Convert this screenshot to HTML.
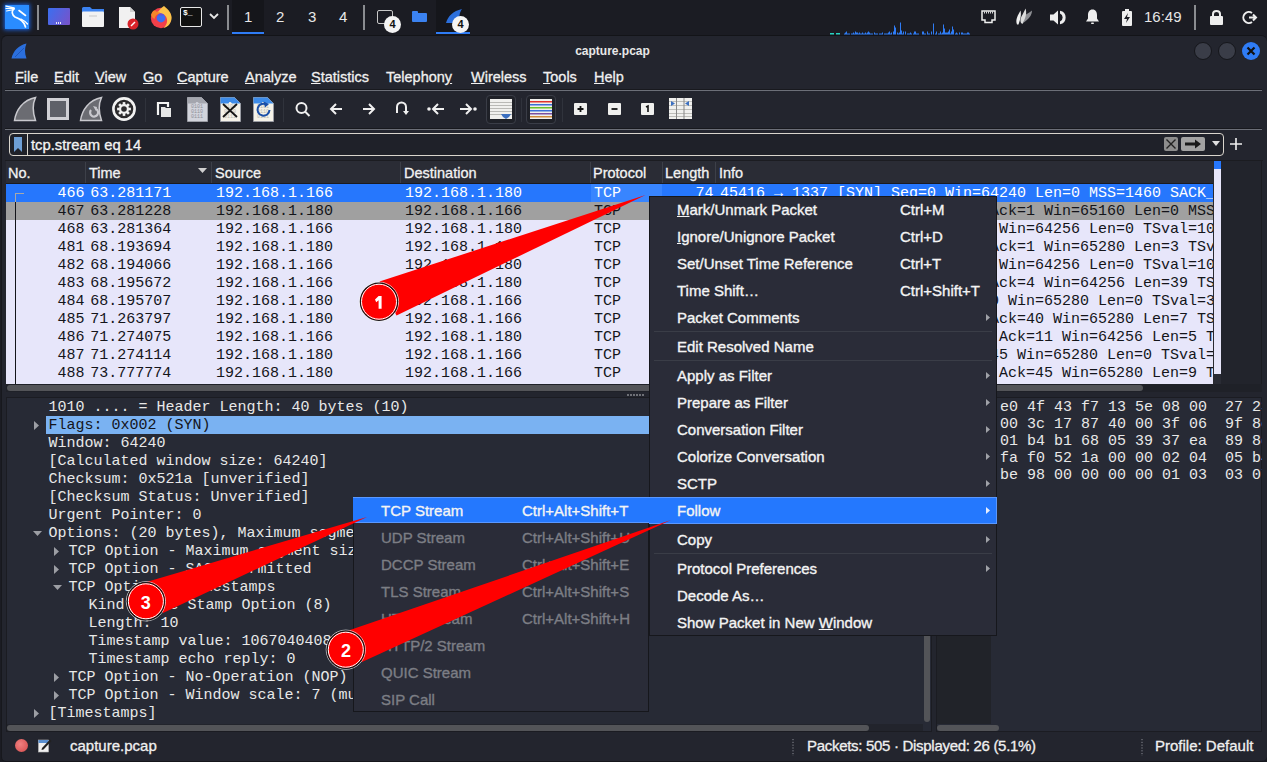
<!DOCTYPE html>
<html><head><meta charset="utf-8">
<style>
*{margin:0;padding:0;box-sizing:border-box}
html,body{width:1267px;height:762px;overflow:hidden;background:#1b1c23;font-family:"Liberation Sans",sans-serif;color:#e6e6e6}
.a{position:absolute}
svg{position:absolute;overflow:visible}
#win{position:absolute;left:1px;top:35px;width:1266px;height:727px;background:#23252e;border-radius:6px 6px 5px 5px;border-top:1px solid #131418;border-left:1px solid #17181d;border-bottom:1px solid #15161b}
.mono{font-family:"Liberation Mono",monospace;font-size:14.6px}
.menu span{position:absolute;top:69px;font-size:14.5px;color:#f0f0f0;-webkit-text-stroke:0.3px currentColor}
.hd{top:165px;font-size:14.5px;color:#f2f2f2;white-space:nowrap;-webkit-text-stroke:0.3px currentColor}
.row{left:0;width:1213px;height:18px;overflow:hidden;font-family:"Liberation Mono",monospace;font-size:15px;line-height:18px;white-space:pre}
.row span{top:1px}
.dl{font-family:"Liberation Mono",monospace;font-size:15px;line-height:18px;white-space:pre}
.hx{font-family:"Liberation Mono",monospace;font-size:15px;line-height:17.05px;white-space:pre;color:#e8e8e8}
.mi{font-size:15px;line-height:18px;color:#f4f4f4;white-space:nowrap;-webkit-text-stroke:0.35px currentColor}
.ws{position:absolute;top:8px;font-size:15px;color:#e8e8e8}
.st{-webkit-text-stroke:0.3px currentColor}
</style></head><body>
<!-- ===== taskbar ===== -->
<div class="a" style="left:0;top:0;width:1267px;height:35px;background:#1b1c23"></div>
<!-- kali logo -->
<div class="a" style="left:5px;top:5px;width:24px;height:24px;background:#2a8cff;box-shadow:0 0 4px 1px #1a5fd8"></div>
<svg style="left:5px;top:5px" width="24" height="24" viewBox="0 0 24 24"><g stroke="#fff" fill="none" stroke-linecap="round"><path d="M1 1.2 L9 3" stroke-width="1.3"/><path d="M1 3.5 L9 3.6" stroke-width="1.2"/><path d="M1.5 6 L9 4.5" stroke-width="1.2"/><path d="M9 3.5 C6 6 7 10 10 12 C15 14 19 16 20.5 22" stroke-width="1.7"/><path d="M14 5.5 L20.5 10.5" stroke-width="1.6"/><path d="M16 14 C19 15.5 21 17 22.5 19" stroke-width="1.3"/></g></svg>
<div class="a" style="left:44px;top:0px;width:0;height:0"></div>
<div class="a" style="left:37px;top:5px;width:2px;height:25px;background:#8a8c90"></div>
<!-- purple app -->
<div class="a" style="left:48px;top:8px;width:22px;height:17px;border-radius:1px;background:linear-gradient(120deg,#3a6ff0,#7a52c8)"></div>
<div class="a" style="left:56px;top:22px;width:6px;height:2px;background:repeating-linear-gradient(90deg,#e8e8f8 0 1.5px,transparent 1.5px 2px)"></div>
<!-- folder -->
<svg style="left:82px;top:7px" width="22" height="20" viewBox="0 0 22 20"><path d="M0 1.5 Q0 0 1.5 0 H8 L10 2 H22 V6 H0z" fill="#3b82f0"/><rect x="0" y="4.5" width="22" height="15.5" rx="1" fill="#f2f2f2"/><path d="M7 9h8" stroke="#c8c8c8" stroke-width="1"/></svg>
<!-- doc -->
<svg style="left:118px;top:6px" width="22" height="23" viewBox="0 0 22 23"><path d="M1 1h11l5 5v16H1z" fill="#f1f1f1"/><path d="M12 1v5h5" fill="#cfcfcf"/><circle cx="15" cy="18" r="5.5" fill="#d8242a"/><path d="M13 20l4-4" stroke="#fff" stroke-width="1.5"/></svg>
<!-- firefox -->
<svg style="left:150px;top:6px" width="22" height="23" viewBox="0 0 22 23"><circle cx="11" cy="12" r="10.2" fill="#f2404a"/><path d="M1 9 C2 5 4 4 5 4.5 L7 6 L8 5 L10 7.5 C7 8 5 10 4.5 13 C3 12 1.5 11 1 9z" fill="#f7862b"/><path d="M8 6 C10 3 13 0.5 14 0 C16 2 21 5 21.6 11 C21.8 17 18 21 13.5 22 C18 18 18.5 12 14 8.5z" fill="#fcc34a"/><circle cx="11" cy="12" r="4.4" fill="#3b6ff3"/><path d="M7.5 9.5 C9 7.5 12 7 14 8.5 L12.5 9.5z" fill="#6650d8"/></svg>
<!-- terminal -->
<div class="a" style="left:180px;top:7px;width:22px;height:20px;border:1.5px solid #e8e8e8;border-radius:2px;background:#111"></div>
<div class="a" style="left:183px;top:8px;font-size:8px;font-weight:bold;color:#fff;font-family:'Liberation Mono',monospace">$_</div>
<svg style="left:209px;top:13px" width="10" height="7" viewBox="0 0 10 7"><path d="M1 1l4 4 4-4" stroke="#e8e8e8" stroke-width="1.8" fill="none"/></svg>
<div class="a" style="left:227px;top:5px;width:2px;height:25px;background:#8a8c90"></div>
<!-- workspaces -->
<div class="a" style="left:232px;top:0;width:32px;height:35px;background:#15161b"></div>
<div class="a" style="left:232px;top:32px;width:32px;height:2px;background:#2f7cf5"></div>
<span class="ws" style="left:244px">1</span>
<span class="ws" style="left:276px">2</span>
<span class="ws" style="left:308px">3</span>
<span class="ws" style="left:339px">4</span>
<div class="a" style="left:363px;top:5px;width:2px;height:25px;background:#8a8c90"></div>
<!-- terminal app -->
<div class="a" style="left:377px;top:10px;width:16px;height:14px;border:1.5px solid #c8c8c8;border-radius:2px"></div>
<div class="a" style="left:384px;top:16px;width:17px;height:17px;border-radius:50%;background:#f4f4f4;color:#111;font-size:11px;font-weight:bold;text-align:center;line-height:17px">4</div>
<!-- folder app -->
<div class="a" style="left:412px;top:11px;width:6px;height:3px;background:#3b82f0;border-radius:1px"></div>
<div class="a" style="left:412px;top:13px;width:15px;height:9px;background:#3b82f0;border-radius:1px"></div>
<!-- wireshark app -->
<div class="a" style="left:436px;top:0;width:34px;height:35px;background:#15161b"></div>
<div class="a" style="left:436px;top:32px;width:34px;height:2px;background:#2f7cf5"></div>
<svg style="left:445px;top:8px" width="18" height="16" viewBox="0 0 18 16"><path d="M1 15 C3 8 8 3 17 1 C14 5 14 10 15 15z" fill="#2b6fdc"/></svg>
<div class="a" style="left:452px;top:16px;width:17px;height:17px;border-radius:50%;background:#f4f4f4;color:#111;font-size:11px;font-weight:bold;text-align:center;line-height:17px">4</div>
<!-- cpu graph -->
<svg id="cpu" style="left:830px;top:18px" width="142" height="17" viewBox="0 0 142 17"><rect x="0" y="15" width="4" height="1.5" fill="#26d4c2"/><rect x="6" y="15" width="4" height="1.5" fill="#26d4c2"/><rect x="14" y="15.5" width="1" height="1" fill="#2f7cf5"/><rect x="15" y="14.5" width="1" height="2" fill="#2f7cf5"/><rect x="16" y="13.5" width="1" height="3" fill="#2f7cf5"/><rect x="17" y="15.5" width="1" height="1" fill="#2f7cf5"/><rect x="18" y="15.5" width="1" height="1" fill="#2f7cf5"/><rect x="19" y="15.5" width="1" height="1" fill="#2f7cf5"/><rect x="21" y="15.5" width="1" height="1" fill="#2f7cf5"/><rect x="22" y="15.5" width="1" height="1" fill="#2f7cf5"/><rect x="23" y="14.5" width="1" height="2" fill="#2f7cf5"/><rect x="24" y="15.5" width="1" height="1" fill="#2f7cf5"/><rect x="25" y="13.5" width="1" height="3" fill="#2f7cf5"/><rect x="26" y="14.5" width="1" height="2" fill="#2f7cf5"/><rect x="27" y="14.5" width="1" height="2" fill="#2f7cf5"/><rect x="28" y="15.5" width="1" height="1" fill="#2f7cf5"/><rect x="29" y="14.5" width="1" height="2" fill="#2f7cf5"/><rect x="30" y="15.5" width="1" height="1" fill="#2f7cf5"/><rect x="31" y="15.5" width="1" height="1" fill="#2f7cf5"/><rect x="32" y="14.5" width="1" height="2" fill="#2f7cf5"/><rect x="33" y="15.5" width="1" height="1" fill="#2f7cf5"/><rect x="34" y="15.5" width="1" height="1" fill="#2f7cf5"/><rect x="35" y="14.5" width="1" height="2" fill="#2f7cf5"/><rect x="36" y="15.5" width="1" height="1" fill="#2f7cf5"/><rect x="37" y="14.5" width="1" height="2" fill="#2f7cf5"/><rect x="38" y="13.5" width="1" height="3" fill="#2f7cf5"/><rect x="39" y="14.5" width="1" height="2" fill="#2f7cf5"/><rect x="40" y="15.5" width="1" height="1" fill="#2f7cf5"/><rect x="41" y="15.5" width="1" height="1" fill="#2f7cf5"/><rect x="42" y="15.5" width="1" height="1" fill="#2f7cf5"/><rect x="44" y="14.5" width="1" height="2" fill="#2f7cf5"/><rect x="45" y="15.5" width="1" height="1" fill="#2f7cf5"/><rect x="46" y="15.5" width="1" height="1" fill="#2f7cf5"/><rect x="47" y="15.5" width="1" height="1" fill="#2f7cf5"/><rect x="49" y="15.5" width="1" height="1" fill="#2f7cf5"/><rect x="50" y="15.5" width="1" height="1" fill="#2f7cf5"/><rect x="51" y="15.5" width="1" height="1" fill="#2f7cf5"/><rect x="52" y="14.5" width="1" height="2" fill="#2f7cf5"/><rect x="54" y="15.5" width="1" height="1" fill="#2f7cf5"/><rect x="55" y="15.5" width="1" height="1" fill="#2f7cf5"/><rect x="56" y="15.5" width="1" height="1" fill="#2f7cf5"/><rect x="57" y="15.5" width="1" height="1" fill="#2f7cf5"/><rect x="58" y="14.5" width="1" height="2" fill="#2f7cf5"/><rect x="59" y="13.5" width="1" height="3" fill="#2f7cf5"/><rect x="60" y="15.5" width="1" height="1" fill="#2f7cf5"/><rect x="61" y="14.5" width="1" height="2" fill="#2f7cf5"/><rect x="63" y="13.5" width="1" height="3" fill="#2f7cf5"/><rect x="64" y="7.5" width="1" height="9" fill="#2f7cf5"/><rect x="65" y="9.5" width="1" height="7" fill="#2f7cf5"/><rect x="67" y="14.5" width="1" height="2" fill="#2f7cf5"/><rect x="68" y="15.5" width="1" height="1" fill="#2f7cf5"/><rect x="69" y="14.5" width="1" height="2" fill="#2f7cf5"/><rect x="70" y="4.5" width="1" height="12" fill="#2f7cf5"/><rect x="71" y="12.5" width="1" height="4" fill="#2f7cf5"/><rect x="72" y="15.5" width="1" height="1" fill="#2f7cf5"/><rect x="73" y="13.5" width="1" height="3" fill="#2f7cf5"/><rect x="75" y="13.5" width="1" height="3" fill="#2f7cf5"/><rect x="77" y="15.5" width="1" height="1" fill="#2f7cf5"/><rect x="78" y="15.5" width="1" height="1" fill="#2f7cf5"/><rect x="79" y="15.5" width="1" height="1" fill="#2f7cf5"/><rect x="80" y="14.5" width="1" height="2" fill="#2f7cf5"/><rect x="81" y="15.5" width="1" height="1" fill="#2f7cf5"/><rect x="83" y="15.5" width="1" height="1" fill="#2f7cf5"/><rect x="84" y="13.5" width="1" height="3" fill="#2f7cf5"/><rect x="85" y="13.5" width="1" height="3" fill="#2f7cf5"/><rect x="86" y="15.5" width="1" height="1" fill="#2f7cf5"/><rect x="87" y="15.5" width="1" height="1" fill="#2f7cf5"/><rect x="88" y="15.5" width="1" height="1" fill="#2f7cf5"/><rect x="92" y="13.5" width="1" height="3" fill="#2f7cf5"/><rect x="93" y="13.5" width="1" height="3" fill="#2f7cf5"/><rect x="94" y="15.5" width="1" height="1" fill="#2f7cf5"/><rect x="95" y="15.5" width="1" height="1" fill="#2f7cf5"/><rect x="97" y="13.5" width="1" height="3" fill="#2f7cf5"/><rect x="98" y="15.5" width="1" height="1" fill="#2f7cf5"/><rect x="99" y="15.5" width="1" height="1" fill="#2f7cf5"/><rect x="101" y="13.5" width="1" height="3" fill="#2f7cf5"/><rect x="103" y="5.5" width="1" height="11" fill="#2f7cf5"/><rect x="105" y="15.5" width="1" height="1" fill="#2f7cf5"/><rect x="106" y="13.5" width="1" height="3" fill="#2f7cf5"/><rect x="108" y="15.5" width="1" height="1" fill="#2f7cf5"/><rect x="109" y="15.5" width="1" height="1" fill="#2f7cf5"/><rect x="110" y="13.5" width="1" height="3" fill="#2f7cf5"/><rect x="111" y="15.5" width="1" height="1" fill="#2f7cf5"/><rect x="112" y="14.5" width="1" height="2" fill="#2f7cf5"/><rect x="113" y="6.5" width="1" height="10" fill="#2f7cf5"/><rect x="114" y="10.5" width="1" height="6" fill="#2f7cf5"/><rect x="115" y="14.5" width="1" height="2" fill="#2f7cf5"/><rect x="116" y="14.5" width="1" height="2" fill="#2f7cf5"/><rect x="117" y="14.5" width="1" height="2" fill="#2f7cf5"/><rect x="118" y="13.5" width="1" height="3" fill="#2f7cf5"/><rect x="119" y="11.5" width="1" height="5" fill="#2f7cf5"/><rect x="120" y="15.5" width="1" height="1" fill="#2f7cf5"/><rect x="121" y="13.5" width="1" height="3" fill="#2f7cf5"/><rect x="122" y="8.5" width="1" height="8" fill="#2f7cf5"/><rect x="123" y="11.5" width="1" height="5" fill="#2f7cf5"/><rect x="125" y="15.5" width="1" height="1" fill="#2f7cf5"/><rect x="126" y="14.5" width="1" height="2" fill="#2f7cf5"/><rect x="127" y="15.5" width="1" height="1" fill="#2f7cf5"/><rect x="129" y="14.5" width="1" height="2" fill="#2f7cf5"/><rect x="131" y="14.5" width="1" height="2" fill="#2f7cf5"/><rect x="132" y="14.5" width="1" height="2" fill="#2f7cf5"/><rect x="133" y="15.5" width="1" height="1" fill="#2f7cf5"/><rect x="134" y="15.5" width="1" height="1" fill="#2f7cf5"/><rect x="135" y="15.5" width="1" height="1" fill="#2f7cf5"/><rect x="136" y="15.5" width="1" height="1" fill="#2f7cf5"/><rect x="137" y="14.5" width="1" height="2" fill="#2f7cf5"/><rect x="138" y="14.5" width="1" height="2" fill="#2f7cf5"/><rect x="139" y="15.5" width="1" height="1" fill="#2f7cf5"/></svg>
<!-- tray -->
<svg style="left:981px;top:10px" width="15" height="14" viewBox="0 0 15 14"><path d="M1 1H14V10H11V12.5H4V10H1z" fill="none" stroke="#eee" stroke-width="1.5"/><path d="M3.5 1.5v2M5.5 1.5v2M7.5 1.5v2M9.5 1.5v2M11.5 1.5v2" stroke="#eee" stroke-width="0.9"/></svg>
<svg style="left:1015px;top:8px" width="18" height="17" viewBox="0 0 18 17"><path d="M10 7 C14 5 16 3 17 2.5 C17 7 14 11 8 15z" fill="#8d8e93"/><path d="M6 15 C4 10 8 7 10.5 0.5 C12 5 11 9 7.5 16z" fill="#dcdcdc"/><path d="M2 16.5 C0 12 3 7 5.5 2.5 C6.5 7 5.5 11 3.5 16.5z" fill="#f0f0f0"/></svg>
<svg style="left:1049px;top:9px" width="19" height="17" viewBox="0 0 19 17"><path d="M1 5.5h3.5L9 1.5V15.5L4.5 11.5H1z" fill="#eee"/><path d="M11 1.8 A6.8 6.8 0 0 1 11 15.2 V12.4 A4.2 4.2 0 0 0 11 4.6z" fill="#eee"/><path d="M11 6.5 A2 2 0 0 1 11 10.5z" fill="none"/></svg>
<svg style="left:1085px;top:8px" width="15" height="17" viewBox="0 0 15 17"><path d="M7.5 1.5 C4.3 1.5 3 4 3 7 V10.5 L1 13.5 H14 L12 10.5 V7 C12 4 10.7 1.5 7.5 1.5z" fill="#eee"/><rect x="6" y="14.5" width="3" height="1.6" rx="0.8" fill="#eee"/></svg>
<svg style="left:1121px;top:9px" width="12" height="17" viewBox="0 0 12 17"><rect x="4" y="0" width="4" height="2" fill="#eee"/><rect x="1" y="2" width="10" height="15" rx="1" fill="#eee"/><path d="M7 4 L3 10 H6 L5 14 L9 8 H6z" fill="#1b1c23"/></svg>
<div class="a" style="left:1144px;top:8px;font-size:15px;color:#e6e6e6">16:49</div>
<div class="a" style="left:1194px;top:5px;width:2px;height:25px;background:#8a8c90"></div>
<svg style="left:1209px;top:9px" width="15" height="16" viewBox="0 0 15 16"><path d="M4 7V5 C4 1 11 1 11 5 V7" stroke="#eee" stroke-width="2" fill="none"/><rect x="1" y="7" width="13" height="9" rx="1" fill="#eee"/></svg>
<svg style="left:1243px;top:10px" width="16" height="15" viewBox="0 0 16 15"><path d="M9 3 A5.5 5.5 0 1 0 9 12" stroke="#eee" stroke-width="2" fill="none"/><path d="M6 7.5h6M10 4.5l3 3-3 3" stroke="#eee" stroke-width="2" fill="none"/></svg>

<!-- ===== window ===== -->
<div id="win"></div>
<svg style="left:11px;top:43px" width="16" height="16" viewBox="0 0 16 16"><path d="M0.5 15.5 C2 8 8 2 15.5 0.5 C13.5 5 13.5 10 15.5 15.5z" fill="#2b6fdc"/><path d="M4 14 L13 5" stroke="#1d55b8" stroke-width="1"/></svg>
<div class="a" style="left:0;top:44px;width:1225px;text-align:center;font-size:12px;font-weight:bold;color:#e8e8e8">capture.pcap</div>
<div class="a" style="left:1194px;top:42px;width:18px;height:18px;border-radius:50%;background:#3a3d48;border:1px solid #15161b"></div>
<div class="a" style="left:1218px;top:42px;width:18px;height:18px;border-radius:50%;background:#3a3d48;border:1px solid #15161b"></div>
<div class="a" style="left:1242px;top:42px;width:18px;height:18px;border-radius:50%;background:#2f7cf5"></div>
<svg style="left:1242px;top:42px" width="18" height="18" viewBox="0 0 18 18"><path d="M5.5 5.5l7 7M12.5 5.5l-7 7" stroke="#111" stroke-width="2.2"/></svg>
<div class="menu">
<span style="left:15px"><u>F</u>ile</span>
<span style="left:54px"><u>E</u>dit</span>
<span style="left:95px"><u>V</u>iew</span>
<span style="left:143px"><u>G</u>o</span>
<span style="left:177px"><u>C</u>apture</span>
<span style="left:245px"><u>A</u>nalyze</span>
<span style="left:311px"><u>S</u>tatistics</span>
<span style="left:386px">Telephon<u>y</u></span>
<span style="left:471px"><u>W</u>ireless</span>
<span style="left:543px"><u>T</u>ools</span>
<span style="left:594px"><u>H</u>elp</span>
</div>
<div class="a" style="left:5px;top:89px;width:1257px;height:1px;background:#18191e"></div><div class="a" style="left:5px;top:90px;width:1257px;height:1px;background:#6c6f78"></div>
<!-- toolbar -->
<svg style="left:13px;top:96px" width="24" height="26" viewBox="0 0 24 26"><path d="M1.5 24.5 C3 14 10 4 22.5 1.5 C19.5 8 19.5 16 22.5 24.5z" fill="#6b6c72" stroke="#c9c9ce" stroke-width="1.5"/></svg>
<div class="a" style="left:47px;top:98px;width:22px;height:22px;border:3px solid #d0d0d5;background:#5f6169"></div>
<svg style="left:79px;top:96px" width="24" height="26" viewBox="0 0 24 26"><path d="M1.5 24.5 C3 14 10 4 22.5 1.5 C19.5 8 19.5 16 22.5 24.5z" fill="#6b6c72" stroke="#c9c9ce" stroke-width="1.5"/><path d="M12 14 A4 4 0 1 0 17 13" stroke="#c9c9ce" stroke-width="2.2" fill="none"/><path d="M14 10l4 1-1 4z" fill="#c9c9ce"/></svg>
<svg style="left:112px;top:97px" width="24" height="24" viewBox="0 0 24 24"><circle cx="12" cy="12" r="10.6" fill="#2b2a2c" stroke="#f2f2f2" stroke-width="2.6"/><rect x="16.30" y="10.70" width="2.6" height="2.6" transform="rotate(0 17.60 12.00)" fill="#f2f2f2"/><rect x="14.66" y="14.66" width="2.6" height="2.6" transform="rotate(45 15.96 15.96)" fill="#f2f2f2"/><rect x="10.70" y="16.30" width="2.6" height="2.6" transform="rotate(90 12.00 17.60)" fill="#f2f2f2"/><rect x="6.74" y="14.66" width="2.6" height="2.6" transform="rotate(135 8.04 15.96)" fill="#f2f2f2"/><rect x="5.10" y="10.70" width="2.6" height="2.6" transform="rotate(180 6.40 12.00)" fill="#f2f2f2"/><rect x="6.74" y="6.74" width="2.6" height="2.6" transform="rotate(225 8.04 8.04)" fill="#f2f2f2"/><rect x="10.70" y="5.10" width="2.6" height="2.6" transform="rotate(270 12.00 6.40)" fill="#f2f2f2"/><rect x="14.66" y="6.74" width="2.6" height="2.6" transform="rotate(315 15.96 8.04)" fill="#f2f2f2"/><circle cx="12" cy="12" r="5" fill="#f2f2f2"/><circle cx="12" cy="12" r="2.8" fill="#2b2a2c"/></svg>
<div class="a" style="left:145px;top:98px;width:1px;height:24px;background:#30333c"></div>
<svg style="left:156px;top:101px" width="16" height="17" viewBox="0 0 16 17"><path d="M2 14V2h10v4" stroke="#f4f4f4" stroke-width="2.2" fill="none"/><path d="M5 6h4l1 1h5v9H5z" fill="#e6e6e6"/></svg>
<svg style="left:187px;top:97px" width="21" height="25" viewBox="0 0 21 25"><path d="M0.5 0.5h14l6 6v18h-20z" fill="#d2d4dc" stroke="#9a9ca4" stroke-width="1"/><path d="M0.5 0.5h14l6 6H12 C10 4 9 5 8.5 6.5H0.5z" fill="#a4a6ae"/><g font-family="Liberation Mono" font-size="5" fill="#8e9098"><text x="4" y="11">0101</text><text x="4" y="16">0110</text><text x="4" y="21">0111</text></g></svg>
<svg style="left:220px;top:97px" width="21" height="25" viewBox="0 0 21 25"><path d="M0.5 0.5h14l6 6v18h-20z" fill="#f5f2e8" stroke="#9a9ca4" stroke-width="1"/><path d="M0.5 0.5h14l6 6H12 C10 4 9 5 8.5 6.5H0.5z" fill="#3d8be8"/><g font-family="Liberation Mono" font-size="5" fill="#b8b8b0"><text x="4" y="11">0101</text><text x="4" y="16">0110</text><text x="4" y="21">0111</text></g><path d="M3 7l14 13M17 7L3 20" stroke="#151515" stroke-width="1.8"/></svg>
<svg style="left:253px;top:97px" width="21" height="25" viewBox="0 0 21 25"><path d="M0.5 0.5h14l6 6v18h-20z" fill="#f5f2e8" stroke="#9a9ca4" stroke-width="1"/><path d="M0.5 0.5h14l6 6H12 C10 4 9 5 8.5 6.5H0.5z" fill="#3d8be8"/><g font-family="Liberation Mono" font-size="5" fill="#b8b8b0"><text x="4" y="11">0101</text><text x="4" y="16">0110</text><text x="4" y="21">0111</text></g><path d="M13.5 7.5 A6 6 0 1 0 16.5 13" stroke="#1a4fa8" stroke-width="2" fill="none"/><path d="M10.5 4.5l5.5 2.5-4 3.5z" fill="#1a4fa8"/></svg>
<div class="a" style="left:283px;top:98px;width:1px;height:24px;background:#30333c"></div>
<svg style="left:294px;top:101px" width="17" height="17" viewBox="0 0 17 17"><circle cx="7.5" cy="7" r="5" fill="none" stroke="#f0f0f0" stroke-width="2"/><path d="M11 10.5l4.5 4.5" stroke="#f0f0f0" stroke-width="2"/></svg>
<svg style="left:329px;top:102px" width="14" height="14" viewBox="0 0 14 14"><path d="M13 7H2M7 2L2 7l5 5" stroke="#f0f0f0" stroke-width="2" fill="none"/></svg>
<svg style="left:362px;top:102px" width="14" height="14" viewBox="0 0 14 14"><path d="M1 7h11M7 2l5 5-5 5" stroke="#f0f0f0" stroke-width="2" fill="none"/></svg>
<svg style="left:395px;top:101px" width="14" height="15" viewBox="0 0 14 15"><path d="M2 12V6 A4.5 4.5 0 0 1 11 6V11" stroke="#f0f0f0" stroke-width="2" fill="none"/><path d="M8 10l3 4 3-4z" fill="#f0f0f0"/></svg>
<svg style="left:427px;top:102px" width="18" height="14" viewBox="0 0 18 14"><circle cx="2" cy="7" r="1.8" fill="#f0f0f0"/><path d="M17 7H6M11 2L6 7l5 5" stroke="#f0f0f0" stroke-width="2" fill="none"/></svg>
<svg style="left:459px;top:102px" width="18" height="14" viewBox="0 0 18 14"><circle cx="16" cy="7" r="1.8" fill="#f0f0f0"/><path d="M1 7h11M7 2l5 5-5 5" stroke="#f0f0f0" stroke-width="2" fill="none"/></svg>
<div class="a" style="left:486px;top:95px;width:30px;height:29px;border:1px solid #3a3d47;border-radius:4px;background:#1f2128"></div>
<svg style="left:490px;top:99px" width="22" height="21" viewBox="0 0 22 21"><rect x="0" y="0" width="22" height="20" fill="#f0f0ee"/><g fill="#b9b9b6"><rect y="3" width="22" height="1"/><rect y="6" width="22" height="1"/><rect y="9" width="22" height="1"/><rect y="12" width="22" height="1"/><rect y="15" width="22" height="1"/></g><path d="M11 15h10l-2 3-3 2-3-2z" fill="#3b6fc0"/></svg>
<div class="a" style="left:521px;top:98px;width:1px;height:24px;background:#30333c"></div>
<div class="a" style="left:526px;top:95px;width:30px;height:29px;border:1px solid #3a3d47;border-radius:4px;background:#1f2128"></div>
<svg style="left:530px;top:99px" width="22" height="21" viewBox="0 0 22 21"><rect x="0" y="0" width="22" height="20" fill="#f0f0ee"/><rect y="2" width="22" height="1.5" fill="#e0342f"/><rect y="5" width="22" height="1.5" fill="#3a6fd8"/><rect y="8" width="22" height="1.5" fill="#6ac02a"/><rect y="11" width="22" height="1.5" fill="#3a6fd8"/><rect y="14" width="22" height="1.5" fill="#7a4fa0"/><rect y="17" width="22" height="1.5" fill="#d08a3a"/></svg>
<div class="a" style="left:562px;top:98px;width:1px;height:24px;background:#30333c"></div>
<svg style="left:574px;top:103px" width="13" height="12" viewBox="0 0 13 12"><rect width="13" height="12" rx="1" fill="#f0f0ee"/><path d="M6.5 3v6M3.5 6h6" stroke="#111" stroke-width="1.8"/></svg>
<svg style="left:608px;top:103px" width="13" height="12" viewBox="0 0 13 12"><rect width="13" height="12" rx="1" fill="#f0f0ee"/><path d="M3.5 6h6" stroke="#111" stroke-width="1.8"/></svg>
<svg style="left:641px;top:103px" width="13" height="12" viewBox="0 0 13 12"><rect width="13" height="12" rx="1" fill="#f0f0ee"/><path d="M5 4l2-1v6" stroke="#111" stroke-width="1.6" fill="none"/></svg>
<svg style="left:669px;top:98px" width="23" height="22" viewBox="0 0 23 22"><rect width="23" height="21" fill="#f0f0ee"/><g fill="#bdbdb9"><rect y="3" width="23" height="1"/><rect y="7" width="23" height="1"/><rect y="11" width="23" height="1"/><rect y="15" width="23" height="1"/><rect y="18" width="23" height="1"/></g><rect x="7" y="0" width="1" height="21" fill="#888"/><rect x="14.5" y="0" width="1" height="21" fill="#888"/><path d="M2 3v5l4-2.5z M20 3v5l-4-2.5z" fill="#3b6fc0"/></svg>

<div class="a" style="left:5px;top:128px;width:1257px;height:1px;background:#18191e"></div><div class="a" style="left:5px;top:129px;width:1257px;height:1px;background:#6c6f78"></div>

<!-- filter -->
<div class="a" style="left:9px;top:133px;width:1215px;height:23px;border:1.5px solid #d9d5cd;border-radius:4px;background:#1f2129"></div>
<div class="a" style="left:27px;top:134px;width:1px;height:21px;background:#d9d5cd"></div>
<svg style="left:13px;top:137px" width="10" height="15" viewBox="0 0 10 15"><path d="M1 0h8v15l-4-4-4 4z" fill="#6e9fd6"/></svg>
<div class="a st" style="left:31px;top:137px;font-size:14.8px;color:#f4f4f4">tcp.stream eq 14</div>
<div class="a" style="left:1164px;top:137px;width:14px;height:14px;background:#8d8d8d;border-radius:2px"></div>
<svg style="left:1164px;top:137px" width="14" height="14" viewBox="0 0 14 14"><path d="M2.5 2.5l9 9M11.5 2.5l-9 9" stroke="#222" stroke-width="1.4"/></svg>
<div class="a" style="left:1181px;top:137px;width:24px;height:14px;background:#a3a3a3;border-radius:2px"></div>
<svg style="left:1181px;top:137px" width="24" height="14" viewBox="0 0 24 14"><path d="M4 5.5h10V2.5l6 4.5-6 4.5V8.5H4z" fill="#1a1a1a"/></svg>
<svg style="left:1212px;top:141px" width="8" height="5" viewBox="0 0 8 5"><path d="M0 0h8L4 5z" fill="#e0e0e0"/></svg>
<svg style="left:1229px;top:137px" width="14" height="14" viewBox="0 0 14 14"><path d="M7 1v12M1 7h12" stroke="#f0f0f0" stroke-width="1.6"/></svg>
<!-- packet list -->
<div class="a" style="left:5px;top:160px;width:1258px;height:1px;background:#1b1c21"></div><div class="a" style="left:1221px;top:161px;width:41px;height:223px;background:#22242c;border-right:1px solid #1b1c21"></div>
<div class="a" style="left:6px;top:161px;width:1207px;height:23px;background:#2a2c35;border-bottom:1px solid #1a1b20"></div>

<span class="a hd" style="left:8px">No.</span>
<div class="a" style="left:85px;top:162px;width:1px;height:21px;background:#3d4049"></div>
<span class="a hd" style="left:89px">Time</span>
<div class="a" style="left:211px;top:162px;width:1px;height:21px;background:#3d4049"></div>
<span class="a hd" style="left:215px">Source</span>
<div class="a" style="left:400px;top:162px;width:1px;height:21px;background:#3d4049"></div>
<span class="a hd" style="left:404px">Destination</span>
<div class="a" style="left:590px;top:162px;width:1px;height:21px;background:#3d4049"></div>
<span class="a hd" style="left:593px">Protocol</span>
<div class="a" style="left:662px;top:162px;width:1px;height:21px;background:#3d4049"></div>
<span class="a hd" style="left:665px">Length</span>
<div class="a" style="left:715px;top:162px;width:1px;height:21px;background:#3d4049"></div>
<span class="a hd" style="left:719px">Info</span>
<svg style="left:198px;top:168px" width="9" height="5" viewBox="0 0 9 5"><path d="M0 0h9L4.5 5z" fill="#d0d0d0"/></svg>
<div class="a" style="left:6px;top:184px;width:1207px;height:200px;background:#e7e6fa"></div>
<div class="a" style="left:6px;top:184px;width:1207px;height:18px;background:#2677fd"></div>
<div class="a" style="left:591px;top:184px;width:71px;height:18px;background:#3885ff"></div>
<div class="a row" style="top:184px;color:#ffffff"><span class="a" style="right:1128.5px">466</span><span class="a" style="left:90.3px">63.281171</span><span class="a" style="left:216px">192.168.1.166</span><span class="a" style="left:405px">192.168.1.180</span><span class="a" style="left:594px">TCP</span><span class="a" style="right:499.5px">74</span><span class="a" style="left:720px">45416 → 1337 [SYN] Seq=0 Win=64240 Len=0 MSS=1460 SACK_PERM</span></div>
<div class="a" style="left:6px;top:202px;width:1207px;height:18px;background:#a0a0a0"></div>
<div class="a row" style="top:202px;color:#14151a"><span class="a" style="right:1128.5px">467</span><span class="a" style="left:90.3px">63.281228</span><span class="a" style="left:216px">192.168.1.180</span><span class="a" style="left:405px">192.168.1.166</span><span class="a" style="left:594px">TCP</span><span class="a" style="right:499.5px">74</span><span class="a" style="left:720px">1337 → 45416 [SYN, ACK] Seq=0 Ack=1 Win=65160 Len=0 MSS=1460 SACK_PERM</span></div>
<div class="a row" style="top:220px;color:#14151a"><span class="a" style="right:1128.5px">468</span><span class="a" style="left:90.3px">63.281364</span><span class="a" style="left:216px">192.168.1.166</span><span class="a" style="left:405px">192.168.1.180</span><span class="a" style="left:594px">TCP</span><span class="a" style="right:499.5px">66</span><span class="a" style="left:720px">45416 → 1337 [ACK] Seq=1 Ack=1 Win=64256 Len=0 TSval=1067040408</span></div>
<div class="a row" style="top:238px;color:#14151a"><span class="a" style="right:1128.5px">481</span><span class="a" style="left:90.3px">68.193694</span><span class="a" style="left:216px">192.168.1.180</span><span class="a" style="left:405px">192.168.1.166</span><span class="a" style="left:594px">TCP</span><span class="a" style="right:499.5px">69</span><span class="a" style="left:720px">1337 → 45416 [PSH, ACK] Seq=1 Ack=1 Win=65280 Len=3 TSval=3</span></div>
<div class="a row" style="top:256px;color:#14151a"><span class="a" style="right:1128.5px">482</span><span class="a" style="left:90.3px">68.194066</span><span class="a" style="left:216px">192.168.1.166</span><span class="a" style="left:405px">192.168.1.180</span><span class="a" style="left:594px">TCP</span><span class="a" style="right:499.5px">66</span><span class="a" style="left:720px">45416 → 1337 [ACK] Seq=1 Ack=4 Win=64256 Len=0 TSval=1067045</span></div>
<div class="a row" style="top:274px;color:#14151a"><span class="a" style="right:1128.5px">483</span><span class="a" style="left:90.3px">68.195672</span><span class="a" style="left:216px">192.168.1.166</span><span class="a" style="left:405px">192.168.1.180</span><span class="a" style="left:594px">TCP</span><span class="a" style="right:499.5px">105</span><span class="a" style="left:720px">45416 → 1337 [PSH, ACK] Seq=1 Ack=4 Win=64256 Len=39 TSval=1</span></div>
<div class="a row" style="top:292px;color:#14151a"><span class="a" style="right:1128.5px">484</span><span class="a" style="left:90.3px">68.195707</span><span class="a" style="left:216px">192.168.1.180</span><span class="a" style="left:405px">192.168.1.166</span><span class="a" style="left:594px">TCP</span><span class="a" style="right:499.5px">66</span><span class="a" style="left:720px">1337 → 45416 [ACK] Seq=4 Ack=40 Win=65280 Len=0 TSval=3</span></div>
<div class="a row" style="top:310px;color:#14151a"><span class="a" style="right:1128.5px">485</span><span class="a" style="left:90.3px">71.263797</span><span class="a" style="left:216px">192.168.1.180</span><span class="a" style="left:405px">192.168.1.166</span><span class="a" style="left:594px">TCP</span><span class="a" style="right:499.5px">73</span><span class="a" style="left:720px">1337 → 45416 [PSH, ACK] Seq=4 Ack=40 Win=65280 Len=7 TSval</span></div>
<div class="a row" style="top:328px;color:#14151a"><span class="a" style="right:1128.5px">486</span><span class="a" style="left:90.3px">71.274075</span><span class="a" style="left:216px">192.168.1.166</span><span class="a" style="left:405px">192.168.1.180</span><span class="a" style="left:594px">TCP</span><span class="a" style="right:499.5px">71</span><span class="a" style="left:720px">45416 → 1337 [PSH, ACK] Seq=40 Ack=11 Win=64256 Len=5 TSval</span></div>
<div class="a row" style="top:346px;color:#14151a"><span class="a" style="right:1128.5px">487</span><span class="a" style="left:90.3px">71.274114</span><span class="a" style="left:216px">192.168.1.180</span><span class="a" style="left:405px">192.168.1.166</span><span class="a" style="left:594px">TCP</span><span class="a" style="right:499.5px">66</span><span class="a" style="left:720px">1337 → 45416 [ACK] Seq=11 Ack=45 Win=65280 Len=0 TSval=3</span></div>
<div class="a row" style="top:364px;color:#14151a"><span class="a" style="right:1128.5px">488</span><span class="a" style="left:90.3px">73.777774</span><span class="a" style="left:216px">192.168.1.180</span><span class="a" style="left:405px">192.168.1.166</span><span class="a" style="left:594px">TCP</span><span class="a" style="right:499.5px">75</span><span class="a" style="left:720px">1337 → 45416 [PSH, ACK] Seq=11 Ack=45 Win=65280 Len=9 TSval</span></div>
<div class="a" style="left:15px;top:193px;width:9px;height:1px;background:#a8a8a8"></div>
<div class="a" style="left:15px;top:193px;width:1px;height:9px;background:#a8a8a8"></div>
<div class="a" style="left:15px;top:202px;width:1px;height:182px;background:#14151a"></div>
<div class="a" style="left:1213px;top:161px;width:8px;height:223px;background:#e7e6fa;border-left:1px solid #2a2a30"></div>
<div class="a" style="left:1214px;top:161px;width:7px;height:8px;background:#2677fd"></div>
<div class="a" style="left:1214px;top:374px;width:7px;height:10px;background:#2a2c35"></div>
<div class="a" style="left:6px;top:384px;width:1256px;height:8px;background:#1f2128"></div>
<div class="a" style="left:7px;top:385px;width:1136px;height:6px;border-radius:3px;background:#535458"></div>
<!-- details pane -->
<div class="a" style="left:6px;top:397px;width:926px;height:335px;background:#272a35;border:1px solid #1b1c22"></div>
<svg style="left:627px;top:394px" width="18" height="2" viewBox="0 0 18 2"><rect x="0" y="0" width="2" height="2" fill="#6e7076"/><rect x="3" y="0" width="2" height="2" fill="#6e7076"/><rect x="6" y="0" width="2" height="2" fill="#6e7076"/><rect x="9" y="0" width="2" height="2" fill="#6e7076"/><rect x="12" y="0" width="2" height="2" fill="#6e7076"/><rect x="15" y="0" width="2" height="2" fill="#6e7076"/></svg>
<div class="a" style="left:46px;top:416px;width:878px;height:18px;background:#7ab2f2"></div>

<div class="a dl" style="left:48.5px;top:399px;color:#e8e8e8">1010 .... = Header Length: 40 bytes (10)</div>
<div class="a dl" style="left:48.5px;top:417px;color:#14151a">Flags: 0x002 (SYN)</div>
<svg style="left:34px;top:421px" width="5" height="9" viewBox="0 0 5 9"><path d="M0 0L5 4.5L0 9z" fill="#9c9ea4"/></svg>
<div class="a dl" style="left:48.5px;top:435px;color:#e8e8e8">Window: 64240</div>
<div class="a dl" style="left:48.5px;top:453px;color:#e8e8e8">[Calculated window size: 64240]</div>
<div class="a dl" style="left:48.5px;top:471px;color:#e8e8e8">Checksum: 0x521a [unverified]</div>
<div class="a dl" style="left:48.5px;top:489px;color:#e8e8e8">[Checksum Status: Unverified]</div>
<div class="a dl" style="left:48.5px;top:507px;color:#e8e8e8">Urgent Pointer: 0</div>
<div class="a dl" style="left:48.5px;top:525px;color:#e8e8e8">Options: (20 bytes), Maximum segment size, No-Operation (NOP), SACK permitted, Timestamps, No-Operation (NOP), Window scale</div>
<svg style="left:33px;top:531px" width="9" height="5" viewBox="0 0 9 5"><path d="M0 0H9L4.5 5z" fill="#9c9ea4"/></svg>
<div class="a dl" style="left:68.5px;top:543px;color:#e8e8e8">TCP Option - Maximum segment size: 1460 bytes</div>
<svg style="left:54px;top:547px" width="5" height="9" viewBox="0 0 5 9"><path d="M0 0L5 4.5L0 9z" fill="#9c9ea4"/></svg>
<div class="a dl" style="left:68.5px;top:561px;color:#e8e8e8">TCP Option - SACK permitted</div>
<svg style="left:54px;top:565px" width="5" height="9" viewBox="0 0 5 9"><path d="M0 0L5 4.5L0 9z" fill="#9c9ea4"/></svg>
<div class="a dl" style="left:68.5px;top:579px;color:#e8e8e8">TCP Option - Timestamps</div>
<svg style="left:53px;top:585px" width="9" height="5" viewBox="0 0 9 5"><path d="M0 0H9L4.5 5z" fill="#9c9ea4"/></svg>
<div class="a dl" style="left:88.5px;top:597px;color:#e8e8e8">Kind: Time Stamp Option (8)</div>
<div class="a dl" style="left:88.5px;top:615px;color:#e8e8e8">Length: 10</div>
<div class="a dl" style="left:88.5px;top:633px;color:#e8e8e8">Timestamp value: 1067040408</div>
<div class="a dl" style="left:88.5px;top:651px;color:#e8e8e8">Timestamp echo reply: 0</div>
<div class="a dl" style="left:68.5px;top:669px;color:#e8e8e8">TCP Option - No-Operation (NOP)</div>
<svg style="left:54px;top:673px" width="5" height="9" viewBox="0 0 5 9"><path d="M0 0L5 4.5L0 9z" fill="#9c9ea4"/></svg>
<div class="a dl" style="left:68.5px;top:687px;color:#e8e8e8">TCP Option - Window scale: 7 (multiply by 128)</div>
<svg style="left:54px;top:691px" width="5" height="9" viewBox="0 0 5 9"><path d="M0 0L5 4.5L0 9z" fill="#9c9ea4"/></svg>
<div class="a dl" style="left:48.5px;top:705px;color:#e8e8e8">[Timestamps]</div>
<svg style="left:34px;top:709px" width="5" height="9" viewBox="0 0 5 9"><path d="M0 0L5 4.5L0 9z" fill="#9c9ea4"/></svg>
<div class="a" style="left:924px;top:398px;width:7px;height:326px;background:#272a35"></div>
<div class="a" style="left:924px;top:398px;width:6px;height:324px;border-radius:3px;background:#535458"></div>
<div class="a" style="left:7px;top:724px;width:916px;height:7px;background:#22242c"></div>
<div class="a" style="left:7px;top:725px;width:862px;height:6px;border-radius:3px;background:#535458"></div>
<!-- hex pane -->
<div class="a" style="left:936px;top:397px;width:326px;height:335px;background:#272a35;border:1px solid #1b1c22"></div>
<div class="a" style="left:937px;top:398px;width:54px;height:326px;background:#212329"></div>
<div class="a" style="left:937px;top:725px;width:62px;height:6px;border-radius:3px;background:#535458"></div>
<div class="a" style="left:1000px;top:399px;width:262px;height:90px;overflow:hidden">
<div class="a hx" style="left:0;top:0">e0 4f 43 f7 13 5e 08 00  27 23 4c 3a
00 3c 17 87 40 00 3f 06  9f 8e c0 a8
01 b4 b1 68 05 39 37 ea  89 8d 00 00
fa f0 52 1a 00 00 02 04  05 b4 04 02
be 98 00 00 00 00 01 03  03 07</div></div>
<div class="a" style="left:937px;top:398px;width:54px;height:90px;overflow:hidden"><div class="a hx" style="left:3px;top:0">0000
0010
0020
0030
0040</div></div>

<!-- status -->
<div class="a" style="left:15px;top:739px;width:13px;height:13px;border-radius:50%;background:radial-gradient(circle at 40% 40%,#f08080,#d44a4a)"></div>
<svg style="left:38px;top:738px" width="14" height="15" viewBox="0 0 14 15"><rect x="0.5" y="2" width="10" height="12" fill="#f0f0f0" stroke="#bbb" stroke-width="0.6"/><rect x="0.5" y="2" width="10" height="3" fill="#5a8fd0"/><path d="M4 10L12 1.5l1.5 1.5L5.5 11.5 3.5 12z" fill="#222"/></svg>
<div class="a st" style="left:70px;top:737px;font-size:15px;color:#f0f0f0">capture.pcap</div>
<svg style="left:792px;top:739px" width="2" height="17" viewBox="0 0 2 17"><path d="M1 0v17" stroke="#8a8c94" stroke-width="1" stroke-dasharray="1.2 1.6"/></svg>
<div class="a st" style="left:807px;top:737px;font-size:15px;letter-spacing:-0.3px;color:#f0f0f0;white-space:nowrap">Packets: 505 · Displayed: 26 (5.1%)</div>
<svg style="left:1141px;top:739px" width="2" height="17" viewBox="0 0 2 17"><path d="M1 0v17" stroke="#8a8c94" stroke-width="1" stroke-dasharray="1.2 1.6"/></svg>
<div class="a st" style="left:1155px;top:737px;font-size:15px;color:#f0f0f0;white-space:nowrap">Profile: Default</div>


<!-- context menu -->
<div class="a" style="left:649px;top:196px;width:348px;height:440px;background:#2a2c38;border:1px solid #16171c"></div>
<div class="a mi" style="left:677px;top:201px"><u>M</u>ark/Unmark Packet</div>
<div class="a mi" style="left:900px;top:201px">Ctrl+M</div>
<div class="a mi" style="left:677px;top:228px"><u>I</u>gnore/Unignore Packet</div>
<div class="a mi" style="left:900px;top:228px">Ctrl+D</div>
<div class="a mi" style="left:677px;top:255px">Set/Unset Time Reference</div>
<div class="a mi" style="left:900px;top:255px">Ctrl+T</div>
<div class="a mi" style="left:677px;top:282px">Time Shift…</div>
<div class="a mi" style="left:900px;top:282px">Ctrl+Shift+T</div>
<div class="a mi" style="left:677px;top:309px">Packet Comments</div>
<svg style="left:986px;top:314px" width="4" height="7" viewBox="0 0 4 7"><path d="M0 0L4 3.5L0 7z" fill="#a0a2a8"/></svg>
<div class="a" style="left:654px;top:331px;width:338px;height:1px;background:#3a3d47"></div>
<div class="a mi" style="left:677px;top:338px">Edit Resolved Name</div>
<div class="a" style="left:654px;top:360px;width:338px;height:1px;background:#3a3d47"></div>
<div class="a mi" style="left:677px;top:367px">Apply as Filter</div>
<svg style="left:986px;top:372px" width="4" height="7" viewBox="0 0 4 7"><path d="M0 0L4 3.5L0 7z" fill="#a0a2a8"/></svg>
<div class="a mi" style="left:677px;top:394px">Prepare as Filter</div>
<svg style="left:986px;top:399px" width="4" height="7" viewBox="0 0 4 7"><path d="M0 0L4 3.5L0 7z" fill="#a0a2a8"/></svg>
<div class="a mi" style="left:677px;top:421px">Conversation Filter</div>
<svg style="left:986px;top:426px" width="4" height="7" viewBox="0 0 4 7"><path d="M0 0L4 3.5L0 7z" fill="#a0a2a8"/></svg>
<div class="a mi" style="left:677px;top:448px">Colorize Conversation</div>
<svg style="left:986px;top:453px" width="4" height="7" viewBox="0 0 4 7"><path d="M0 0L4 3.5L0 7z" fill="#a0a2a8"/></svg>
<div class="a mi" style="left:677px;top:475px">SCTP</div>
<svg style="left:986px;top:480px" width="4" height="7" viewBox="0 0 4 7"><path d="M0 0L4 3.5L0 7z" fill="#a0a2a8"/></svg>
<div class="a" style="left:649px;top:497px;width:348px;height:27px;background:#2478fe;border:1px solid #5a98ff;border-left:none"></div>
<div class="a mi" style="left:677px;top:502px">Follow</div>
<svg style="left:986px;top:507px" width="4" height="7" viewBox="0 0 4 7"><path d="M0 0L4 3.5L0 7z" fill="#e8eefc"/></svg>
<div class="a mi" style="left:677px;top:531px">Copy</div>
<svg style="left:986px;top:536px" width="4" height="7" viewBox="0 0 4 7"><path d="M0 0L4 3.5L0 7z" fill="#a0a2a8"/></svg>
<div class="a" style="left:654px;top:553px;width:338px;height:1px;background:#3a3d47"></div>
<div class="a mi" style="left:677px;top:560px">Protocol Preferences</div>
<svg style="left:986px;top:565px" width="4" height="7" viewBox="0 0 4 7"><path d="M0 0L4 3.5L0 7z" fill="#a0a2a8"/></svg>
<div class="a mi" style="left:677px;top:587px">Decode As…</div>
<div class="a mi" style="left:677px;top:614px">Show Packet in New <u>W</u>indow</div>
<!-- submenu -->
<div class="a" style="left:353px;top:497px;width:296px;height:215px;background:#2a2c38;border:1px solid #16171c"></div>
<div class="a" style="left:353px;top:497px;width:296px;height:26px;background:#2478fe;border:1px solid #5a98ff;border-left:none;border-right:none"></div>
<div class="a mi" style="left:381px;top:501.70000000000005px;color:#f4f4f4">TCP Stream</div>
<div class="a mi" style="left:522px;top:501.70000000000005px;color:#f4f4f4">Ctrl+Alt+Shift+T</div>
<div class="a mi" style="left:381px;top:528.7px;color:#7c7e85">UDP Stream</div>
<div class="a mi" style="left:522px;top:528.7px;color:#7c7e85">Ctrl+Alt+Shift+U</div>
<div class="a mi" style="left:381px;top:555.7px;color:#7c7e85">DCCP Stream</div>
<div class="a mi" style="left:522px;top:555.7px;color:#7c7e85">Ctrl+Alt+Shift+E</div>
<div class="a mi" style="left:381px;top:582.7px;color:#7c7e85">TLS Stream</div>
<div class="a mi" style="left:522px;top:582.7px;color:#7c7e85">Ctrl+Alt+Shift+S</div>
<div class="a mi" style="left:381px;top:609.7px;color:#7c7e85">HTTP Stream</div>
<div class="a mi" style="left:522px;top:609.7px;color:#7c7e85">Ctrl+Alt+Shift+H</div>
<div class="a mi" style="left:381px;top:636.7px;color:#7c7e85">HTTP/2 Stream</div>
<div class="a mi" style="left:381px;top:663.7px;color:#7c7e85">QUIC Stream</div>
<div class="a mi" style="left:381px;top:690.7px;color:#7c7e85">SIP Call</div>
<!-- arrows -->
<svg style="left:0;top:0" width="1267" height="762" viewBox="0 0 1267 762">
<path d="M379.5 281.5 L645.5 195 L396.5 315.5z" fill="#ff0000"/>
<circle cx="379" cy="301.7" r="19.6" fill="none" stroke="#f0f0f0" stroke-opacity="0.75" stroke-width="1"/>
<circle cx="379" cy="301.7" r="18.6" fill="#ff0000" stroke="#161616" stroke-width="1.2"/>
<circle cx="379" cy="301.7" r="17.5" fill="#ff0000" stroke="#ffffff" stroke-width="1"/>
<path d="M348.5 630.5 L671 520 L362 662z" fill="#ff0000"/>
<circle cx="345.8" cy="649.7" r="19.6" fill="none" stroke="#f0f0f0" stroke-opacity="0.75" stroke-width="1"/>
<circle cx="345.8" cy="649.7" r="18.6" fill="#ff0000" stroke="#161616" stroke-width="1.2"/>
<circle cx="345.8" cy="649.7" r="17.5" fill="#ff0000" stroke="#ffffff" stroke-width="1"/>
<path d="M146.5 582 L367 517 L163 613z" fill="#ff0000"/>
<circle cx="145.9" cy="601.3" r="19.6" fill="none" stroke="#f0f0f0" stroke-opacity="0.75" stroke-width="1"/>
<circle cx="145.9" cy="601.3" r="18.6" fill="#ff0000" stroke="#161616" stroke-width="1.2"/>
<circle cx="145.9" cy="601.3" r="17.5" fill="#ff0000" stroke="#ffffff" stroke-width="1"/>
<path d="M375 299.5 L378.6 296 H381.6 V308.8 H378.6 V300.3 L376.2 302.3z" fill="#fff"/>
<g font-family="Liberation Sans" font-weight="bold" font-size="18" fill="#fff" text-anchor="middle">
<text x="346" y="657">2</text>
<text x="145.8" y="608.9">3</text>
</g>
</svg>


</body></html>
